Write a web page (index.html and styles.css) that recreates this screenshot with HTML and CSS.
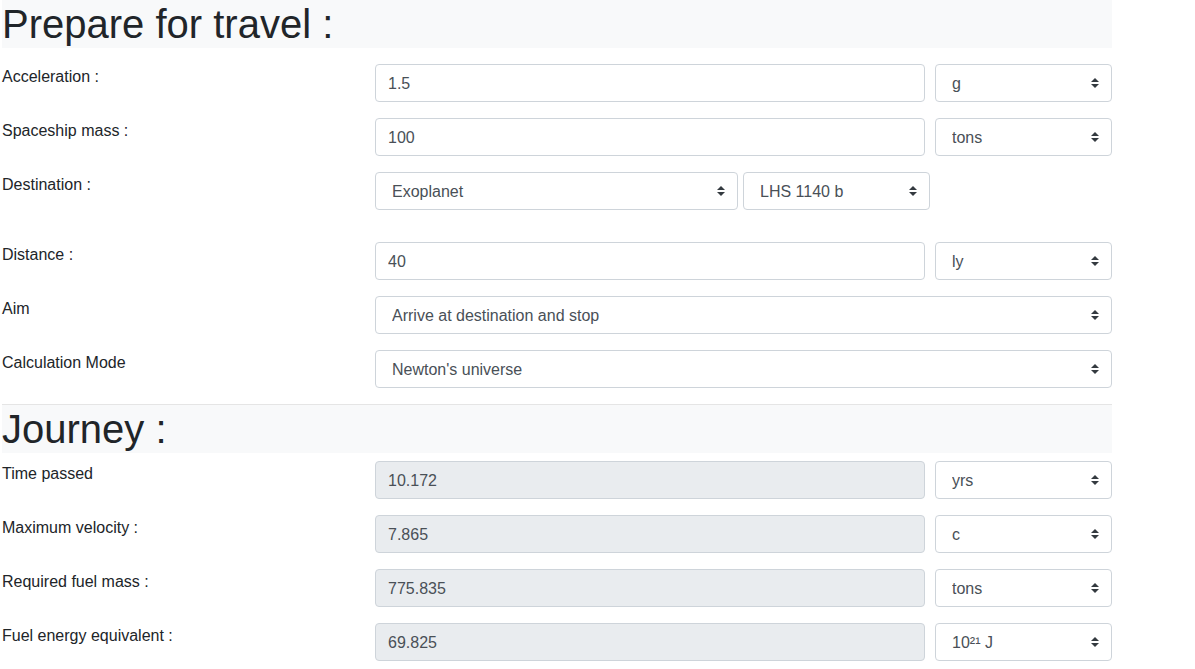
FILE: index.html
```html
<!DOCTYPE html>
<html>
<head>
<meta charset="utf-8">
<link rel="stylesheet" href="styles.css">
</head>
<body>
<div class="page">
  <h1 class="section-title first">Prepare for travel :</h1>

  <div class="row">
    <label class="label">Acceleration :</label>
    <div class="fields">
      <input class="input" type="text" value="1.5">
      <div class="sel unit"><select><option>g</option></select><svg class="arrow" viewBox="0 0 4 5" width="8" height="10"><path d="M2 0L0 2h4zm0 5L0 3h4z" fill="#343a40"/></svg></div>
    </div>
  </div>

  <div class="row">
    <label class="label">Spaceship mass :</label>
    <div class="fields">
      <input class="input" type="text" value="100">
      <div class="sel unit"><select><option>tons</option></select><svg class="arrow" viewBox="0 0 4 5" width="8" height="10"><path d="M2 0L0 2h4zm0 5L0 3h4z" fill="#343a40"/></svg></div>
    </div>
  </div>

  <div class="row dest">
    <label class="label">Destination :</label>
    <div class="fields tight">
      <div class="sel type"><select><option>Exoplanet</option></select><svg class="arrow" viewBox="0 0 4 5" width="8" height="10"><path d="M2 0L0 2h4zm0 5L0 3h4z" fill="#343a40"/></svg></div>
      <div class="sel planet"><select><option>LHS 1140 b</option></select><svg class="arrow" viewBox="0 0 4 5" width="8" height="10"><path d="M2 0L0 2h4zm0 5L0 3h4z" fill="#343a40"/></svg></div>
    </div>
  </div>

  <div class="row">
    <label class="label">Distance :</label>
    <div class="fields">
      <input class="input" type="text" value="40">
      <div class="sel unit"><select><option>ly</option></select><svg class="arrow" viewBox="0 0 4 5" width="8" height="10"><path d="M2 0L0 2h4zm0 5L0 3h4z" fill="#343a40"/></svg></div>
    </div>
  </div>

  <div class="row">
    <label class="label">Aim</label>
    <div class="fields">
      <div class="sel wide"><select><option>Arrive at destination and stop</option></select><svg class="arrow" viewBox="0 0 4 5" width="8" height="10"><path d="M2 0L0 2h4zm0 5L0 3h4z" fill="#343a40"/></svg></div>
    </div>
  </div>

  <div class="row">
    <label class="label">Calculation Mode</label>
    <div class="fields">
      <div class="sel wide"><select><option>Newton's universe</option></select><svg class="arrow" viewBox="0 0 4 5" width="8" height="10"><path d="M2 0L0 2h4zm0 5L0 3h4z" fill="#343a40"/></svg></div>
    </div>
  </div>

  <hr class="divider">
  <h1 class="section-title second">Journey :</h1>

  <div class="row">
    <label class="label">Time passed</label>
    <div class="fields">
      <input class="input" type="text" value="10.172" readonly>
      <div class="sel unit"><select><option>yrs</option></select><svg class="arrow" viewBox="0 0 4 5" width="8" height="10"><path d="M2 0L0 2h4zm0 5L0 3h4z" fill="#343a40"/></svg></div>
    </div>
  </div>

  <div class="row">
    <label class="label">Maximum velocity :</label>
    <div class="fields">
      <input class="input" type="text" value="7.865" readonly>
      <div class="sel unit"><select><option>c</option></select><svg class="arrow" viewBox="0 0 4 5" width="8" height="10"><path d="M2 0L0 2h4zm0 5L0 3h4z" fill="#343a40"/></svg></div>
    </div>
  </div>

  <div class="row">
    <label class="label">Required fuel mass :</label>
    <div class="fields">
      <input class="input" type="text" value="775.835" readonly>
      <div class="sel unit"><select><option>tons</option></select><svg class="arrow" viewBox="0 0 4 5" width="8" height="10"><path d="M2 0L0 2h4zm0 5L0 3h4z" fill="#343a40"/></svg></div>
    </div>
  </div>

  <div class="row">
    <label class="label">Fuel energy equivalent :</label>
    <div class="fields">
      <input class="input" type="text" value="69.825" readonly>
      <div class="sel unit"><select><option>10²¹ J</option></select><svg class="arrow" viewBox="0 0 4 5" width="8" height="10"><path d="M2 0L0 2h4zm0 5L0 3h4z" fill="#343a40"/></svg></div>
    </div>
  </div>
</div>
</body>
</html>
```

FILE: styles.css
```css
html, body {
  margin: 0;
  padding: 0;
  background: #fff;
}
body {
  font-family: "Liberation Sans", Arial, sans-serif;
  font-size: 16px;
  line-height: 1.5;
  color: #212529;
}
.page {
  width: 1110px;
  margin-left: 2px;
}
.section-title {
  margin: 0;
  font-size: 40px;
  font-weight: 400;
  line-height: 48px;
  height: 48px;
  background: #f8f9fa;
  color: #212529;
}
.section-title.first {
  margin-bottom: 16px;
}
.section-title.second {
  margin-bottom: 8px;
}
.divider {
  margin: 0;
  border: 0;
  border-top: 1px solid rgba(0, 0, 0, 0.1);
  height: 0;
}
.row {
  display: flex;
  height: 38px;
  margin-bottom: 16px;
}
.row.dest {
  margin-bottom: 32px;
}
.label {
  width: 373px;
  flex: none;
  display: block;
  line-height: 24px;
  margin-top: 1px;
}
.fields {
  flex: 1;
  display: flex;
  gap: 10px;
}
.fields.tight {
  gap: 5px;
}
.input {
  flex: 1;
  min-width: 0;
  box-sizing: border-box;
  height: 38px;
  padding: 7px 12px 5px;
  border: 1px solid #ced4da;
  border-radius: 4px;
  font-family: inherit;
  font-size: 16px;
  line-height: 24px;
  color: #495057;
  background: #fff;
  outline: none;
}
.input[readonly] {
  background: #e9ecef;
}
.sel {
  position: relative;
  height: 38px;
  flex: none;
}
.sel.unit { width: 177px; }
.sel.type { width: 363px; }
.sel.planet { width: 187px; }
.sel.wide { flex: 1; }
.sel select {
  -webkit-appearance: none;
  appearance: none;
  box-sizing: border-box;
  width: 100%;
  height: 38px;
  padding: 7px 28px 5px 16px;
  border: 1px solid #ced4da;
  border-radius: 4px;
  background: #fff;
  font-family: inherit;
  font-size: 16px;
  line-height: 24px;
  color: #495057;
  outline: none;
}
.arrow {
  position: absolute;
  right: 13px;
  top: 14px;
  pointer-events: none;
}
```
